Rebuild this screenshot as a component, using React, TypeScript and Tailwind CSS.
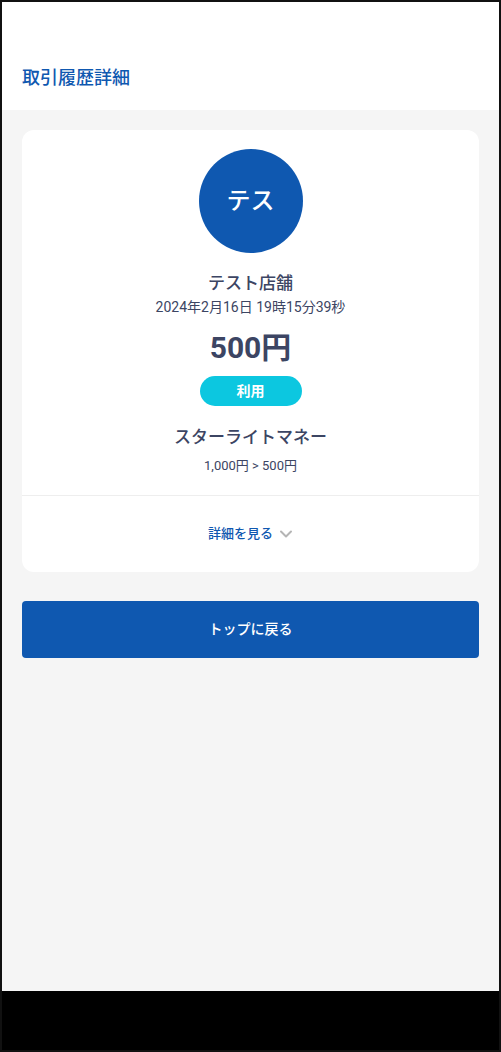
import React from 'react';

const App: React.FC = () => {
  return (
    <div
      className="w-[501px] h-[1052px] border-2 border-[#111] flex flex-col bg-white"
      style={{ fontFamily: 'Roboto, "Noto Sans CJK JP", sans-serif' }}
    >
      {/* Header */}
      <header className="h-[108px] bg-white pt-[64px] px-5">
        <h1 className="text-[18px] leading-6 font-medium text-[#0f58b0]">取引履歴詳細</h1>
      </header>

      {/* Main */}
      <main className="flex-1 bg-[#f5f5f5] px-5 pt-5">
        <div className="bg-white rounded-xl">
          <div className="flex flex-col items-center pt-[19px] pb-[19px]">
            <div className="w-[104px] h-[104px] rounded-full bg-[#0f58b0] flex items-center justify-center">
              <span className="text-white text-[24px] font-medium">テス</span>
            </div>
            <p className="mt-[18px] text-[17px] leading-6 font-medium text-[#3c4563]">テスト店舗</p>
            <p className="mt-[2px] text-[14px] leading-5 text-[#3c4563]">2024年2月16日 19時15分39秒</p>
            <p className="mt-[13px] text-[30px] leading-9 font-bold text-[#3c4563]">500円</p>
            <div className="mt-[10px] w-[102px] h-[30px] rounded-full bg-[#0cc7e0] flex items-center justify-center">
              <span className="text-white text-[14px] font-bold">利用</span>
            </div>
            <p className="mt-[18px] text-[17px] leading-[26px] font-medium text-[#3c4563]">スターライトマネー</p>
            <p className="mt-[6px] text-[13px] leading-5 text-[#3c4563]">1,000円 &gt; 500円</p>
          </div>
          <div className="border-t border-[#eeeeee] h-[77px] flex items-center justify-center gap-[6px]">
            <span className="text-[13px] font-medium text-[#0f58b0]">詳細を見る</span>
            <svg width="14" height="10" viewBox="0 0 14 10" fill="none" stroke="#b5b5b5" strokeWidth="2" strokeLinecap="round" strokeLinejoin="round">
              <path d="M2 2.5l5 5 5-5" />
            </svg>
          </div>
        </div>

        <button className="mt-[29px] w-full h-[57px] rounded bg-[#0f58b0] text-white text-[14px] font-medium">
          トップに戻る
        </button>
      </main>

      {/* Bottom bar */}
      <div className="h-[59px] bg-black"></div>
    </div>
  );
};

export default App;
